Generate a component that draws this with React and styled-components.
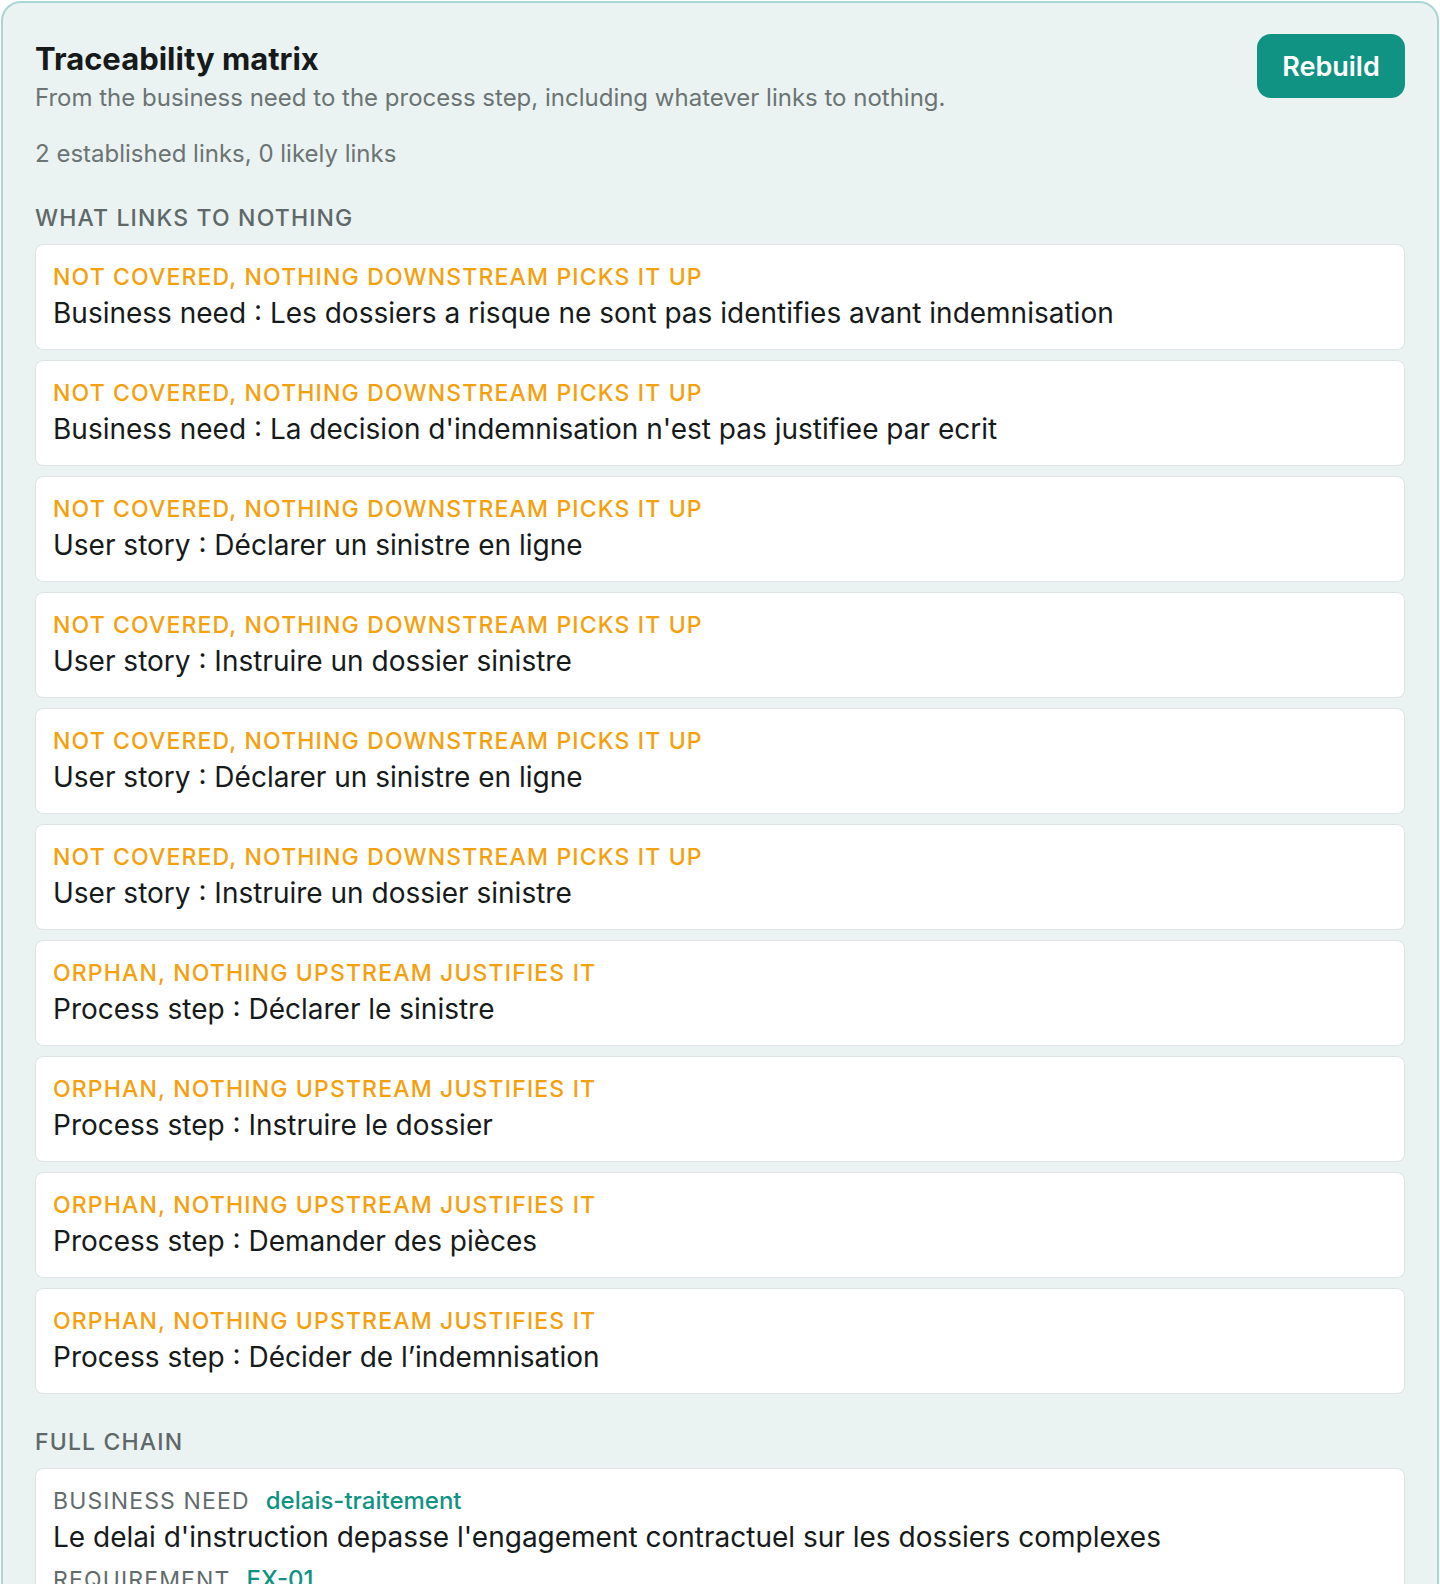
import React from "react";
import styled, { createGlobalStyle } from "styled-components";

const GlobalStyle = createGlobalStyle`
  * { box-sizing: border-box; }
  body {
    margin: 0;
    background: #ffffff;
    font-family: Inter, "Noto Sans", "Liberation Sans", sans-serif;
    color: #161a1a;
  }
`;

const gaps = [
  { kind: "not-covered", type: "Business need", title: "Les dossiers a risque ne sont pas identifies avant indemnisation" },
  { kind: "not-covered", type: "Business need", title: "La decision d'indemnisation n'est pas justifiee par ecrit" },
  { kind: "not-covered", type: "User story", title: "Déclarer un sinistre en ligne" },
  { kind: "not-covered", type: "User story", title: "Instruire un dossier sinistre" },
  { kind: "not-covered", type: "User story", title: "Déclarer un sinistre en ligne" },
  { kind: "not-covered", type: "User story", title: "Instruire un dossier sinistre" },
  { kind: "orphan", type: "Process step", title: "Déclarer le sinistre" },
  { kind: "orphan", type: "Process step", title: "Instruire le dossier" },
  { kind: "orphan", type: "Process step", title: "Demander des pièces" },
  { kind: "orphan", type: "Process step", title: "Décider de l’indemnisation" },
];

const gapLabels = {
  "not-covered": "Not covered, nothing downstream picks it up",
  orphan: "Orphan, nothing upstream justifies it",
};

const chain = [
  { level: "Business need", ref: "delais-traitement", text: "Le delai d'instruction depasse l'engagement contractuel sur les dossiers complexes" },
  { level: "Requirement", ref: "EX-01", text: "Le systeme alerte le gestionnaire quand un dossier complexe approche du delai contractuel" },
];

const Panel = styled.section`
  margin: 1px;
  border: 2px solid #a9d6d3;
  border-radius: 20px;
  background: #eaf3f2;
  padding: 31px 32px 40px;
`;

const Header = styled.header`
  display: flex;
  justify-content: space-between;
  align-items: flex-start;
`;

const Title = styled.h1`
  margin: 6px 0 0;
  font-size: 31px;
  line-height: 38px;
  font-weight: 650;
  color: #161a1a;
`;

const Subtitle = styled.p`
  margin: 4px 0 0;
  font-size: 24px;
  line-height: 32px;
  color: #6b7373;
`;

const Stats = styled.p`
  margin: 24px 0 0;
  font-size: 24px;
  line-height: 32px;
  color: #6b7373;
`;

const RebuildButton = styled.button`
  flex-shrink: 0;
  width: 148px;
  height: 64px;
  border: none;
  border-radius: 14px;
  background: #109383;
  color: #ffffff;
  font-family: inherit;
  font-size: 27px;
  font-weight: 600;
  cursor: pointer;
`;

const SectionTitle = styled.h2`
  margin: 33px 0 11px;
  font-size: 23px;
  line-height: 30px;
  font-weight: 500;
  letter-spacing: 0.05em;
  text-transform: uppercase;
  color: #5f6868;
`;

const List = styled.div`
  display: flex;
  flex-direction: column;
  gap: 10px;
`;

const Card = styled.div`
  background: #ffffff;
  border: 1px solid #dde4e3;
  border-radius: 8px;
  padding: 16px 17px 18px;
`;

const GapLabel = styled.div`
  font-size: 23px;
  line-height: 32px;
  font-weight: 500;
  letter-spacing: 0.05em;
  text-transform: uppercase;
  color: #f5a00d;
`;

const CardText = styled.div`
  margin-top: 2px;
  font-size: 28px;
  line-height: 36px;
  color: #161a1a;
`;

const ChainRow = styled.div`
  & + & {
    margin-top: 9px;
  }
`;

const LevelLine = styled.div`
  display: flex;
  align-items: baseline;
  gap: 16px;
  line-height: 32px;
`;

const Level = styled.span`
  font-size: 23px;
  text-transform: uppercase;
  letter-spacing: 0.05em;
  color: #626b6b;
`;

const Ref = styled.span`
  font-size: 24px;
  font-weight: 500;
  color: #109383;
`;

export default function App() {
  return (
    <>
      <GlobalStyle />
      <Panel>
        <Header>
          <div>
            <Title>Traceability matrix</Title>
            <Subtitle>
              From the business need to the process step, including whatever links to nothing.
            </Subtitle>
          </div>
          <RebuildButton>Rebuild</RebuildButton>
        </Header>
        <Stats>2 established links, 0 likely links</Stats>

        <SectionTitle>What links to nothing</SectionTitle>
        <List>
          {gaps.map((g, i) => (
            <Card key={i}>
              <GapLabel>{gapLabels[g.kind]}</GapLabel>
              <CardText>
                {g.type} : {g.title}
              </CardText>
            </Card>
          ))}
        </List>

        <SectionTitle>Full chain</SectionTitle>
        <Card>
          {chain.map((c, i) => (
            <ChainRow key={i}>
              <LevelLine>
                <Level>{c.level}</Level>
                <Ref>{c.ref}</Ref>
              </LevelLine>
              <CardText>{c.text}</CardText>
            </ChainRow>
          ))}
        </Card>
      </Panel>
    </>
  );
}
